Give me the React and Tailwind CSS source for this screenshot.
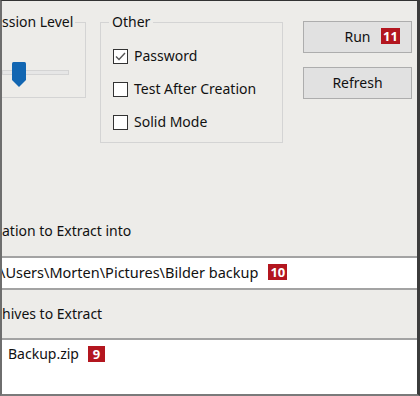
function Badge({ n, className = '' }) {
  return (
    <span
      className={
        'inline-flex h-[16px] min-w-[17px] items-center justify-center bg-[#b3161f] px-[2px] text-[13px] font-bold leading-none text-white ' +
        className
      }
    >
      {n}
    </span>
  );
}

function Check({ checked, label }) {
  return (
    <div className="flex h-[20px] items-center">
      <span className="flex h-[15px] w-[15px] items-center justify-center border border-[#333] bg-white">
        {checked && (
          <svg width="11" height="9" viewBox="0 0 11 9">
            <path d="M1 4.5 L4 7.5 L10 1" fill="none" stroke="#555" strokeWidth="1.4" />
          </svg>
        )}
      </span>
      <span className="ml-[6px]">{label}</span>
    </div>
  );
}

function Button({ children, badge }) {
  return (
    <div className="relative flex h-[32px] items-center justify-center border border-[#adadad] bg-[#e1e1e1]">
      {children}
      {badge && <Badge n={badge} className="absolute left-[77px] top-[6px]" />}
    </div>
  );
}

export default function App() {
  return (
    <div className="flex h-[396px] w-[420px] flex-col overflow-hidden border-b-2 border-l-2 border-r-[3px] border-t border-b-[#7a7a7a] border-l-[#6e6e6e] border-r-[#3c3c3c] border-t-[#333] bg-[#edece9] font-['Noto_Sans',sans-serif] text-[14px] leading-[20px] text-[#111]">
      <div className="flex h-[144px] shrink-0">
        <div className="mt-[21px] h-[76px] w-[84px] border-b border-r border-t border-[#d4d4d4]">
          <div className="-mt-[11px] h-[20px] w-fit whitespace-nowrap bg-[#edece9] pr-[2px]">ssion Level</div>
          <div className="relative mt-[30px] h-[25px]">
            <div className="absolute left-0 top-[8px] h-[5px] w-[67px] border border-[#d4d4d4] bg-[#e6e6e6]" />
            <svg className="absolute left-[10px] top-0" width="14" height="25" viewBox="0 0 14 25">
              <path d="M0 1.5 Q0 0 1.5 0 L12.5 0 Q14 0 14 1.5 L14 18 L7 25 L0 18 Z" fill="#1266b2" />
            </svg>
          </div>
        </div>

        <div className="ml-[14px] mt-[21px] h-[121px] w-[183px] border border-[#d4d4d4]">
          <div className="-mt-[11px] ml-[8px] h-[20px] w-fit bg-[#edece9] px-[3px]">Other</div>
          <div className="flex flex-col gap-[13px] pl-[12px] pt-[14px]">
            <Check checked label="Password" />
            <Check label="Test After Creation" />
            <Check label="Solid Mode" />
          </div>
        </div>

        <div className="ml-[20px] mt-[20px] flex w-[109px] flex-col gap-[14px]">
          <Button badge="11">Run</Button>
          <Button>Refresh</Button>
        </div>
      </div>

      <div className="mt-[76px] h-[20px] whitespace-nowrap">ation to Extract into</div>

      <div className="mt-[15px] flex h-[34px] items-start whitespace-nowrap border-y-2 border-[#a3a3a3] bg-white pt-[4px]">
        <span className="-ml-[2px] text-[14.5px]">\Users\Morten\Pictures\Bilder backup</span>
        <Badge n="10" className="ml-[10px] mt-[2px]" />
      </div>

      <div className="mt-[14px] h-[20px] whitespace-nowrap">hives to Extract</div>

      <div className="mt-[14px] flex flex-1 items-start border-t-2 border-[#a3a3a3] bg-white pl-[6px] pt-[4px]">
        <span>Backup.zip</span>
        <Badge n="9" className="ml-[9px] mt-[2px]" />
      </div>
    </div>
  );
}
